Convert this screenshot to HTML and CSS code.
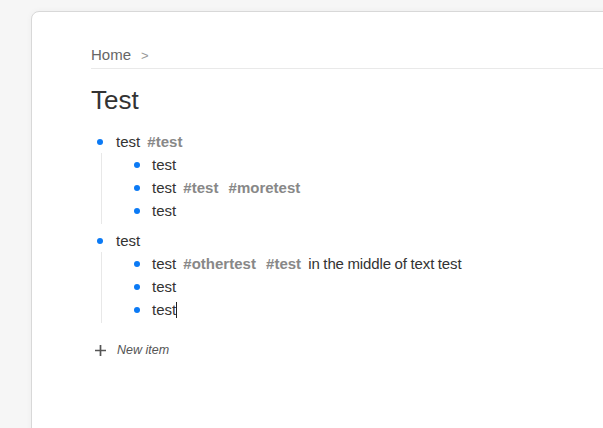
FILE: index.html
```html
<!DOCTYPE html>
<html>
<head>
<meta charset="utf-8">
<link rel="stylesheet" href="styles.css">
</head>
<body>
<div class="card">
  <div class="content">
    <div class="crumbs"><span class="crumb">Home</span><span class="sep">&gt;</span></div>
    <h1 class="title">Test</h1>
    <div class="outline">
      <div class="group">
        <div class="row"><span class="dot"></span><span class="txt">test <span class="tag">#test</span></span></div>
        <div class="children">
          <div class="row"><span class="dot"></span><span class="txt">test</span></div>
          <div class="row"><span class="dot"></span><span class="txt">test <span class="tag">#test</span> <span class="tag">#moretest</span></span></div>
          <div class="row"><span class="dot"></span><span class="txt">test</span></div>
        </div>
      </div>
      <div class="group">
        <div class="row"><span class="dot"></span><span class="txt">test</span></div>
        <div class="children">
          <div class="row"><span class="dot"></span><span class="txt">test <span class="tag">#othertest</span> <span class="tag">#test</span> <span class="plain">in the middle of text test</span></span></div>
          <div class="row"><span class="dot"></span><span class="txt">test</span></div>
          <div class="row"><span class="dot"></span><span class="txt">test<span class="caret"></span></span></div>
        </div>
      </div>
    </div>
    <div class="new-item">
      <svg class="plus" width="11" height="11" viewBox="0 0 11 11"><path d="M5.5 0v11M0 5.5h11" stroke="#555" stroke-width="1.7" fill="none"/></svg>
      <span class="new-label">New item</span>
    </div>
  </div>
</div>
</body>
</html>
```

FILE: styles.css
```css
html, body {
  margin: 0;
  padding: 0;
}
body {
  background: #f6f6f6;
  overflow: hidden;
  font-family: "Liberation Sans", Arial, sans-serif;
  color: #333;
}
.card {
  margin: 11px 0 0 31px;
  width: 700px;
  height: 500px;
  background: #fff;
  border: 1px solid #d8d8d8;
  border-radius: 8px 0 0 0;
  box-shadow: 0 0 6px rgba(0, 0, 0, 0.04);
}
.content {
  padding: 33px 0 0 59px;
}
.crumbs {
  font-size: 15px;
  line-height: 20px;
  padding-bottom: 2px;
  border-bottom: 1px solid #e9e9e9;
  color: #666;
}
.sep {
  color: #999;
  margin-left: 10px;
  font-size: 13px;
}
.title {
  margin: 16px 0 0 0;
  font-size: 26px;
  line-height: 30px;
  font-weight: normal;
  color: #333;
}
.outline {
  margin-top: 15px;
}
.group {
  margin-bottom: 5px;
}
.row {
  display: flex;
  align-items: center;
  height: 23px;
  font-size: 15px;
  line-height: 23px;
  padding-left: 6px;
}
.dot {
  width: 6px;
  height: 6px;
  border-radius: 50%;
  background: #0b7af5;
  flex: none;
  margin-right: 13px;
}
.txt {
  white-space: pre;
}
.plain {
  word-spacing: -0.5px;
  letter-spacing: -0.1px;
}
.children {
  margin-left: 10px;
  border-left: 1px solid #e8e8e8;
  padding: 0 0 2px 26px;
}
.children .dot {
  margin-right: 12px;
}
.tag {
  font-weight: bold;
  color: #888;
  padding: 0 3px;
}
.caret {
  display: inline-block;
  width: 1px;
  height: 16px;
  background: #222;
  vertical-align: -3px;
}
.new-item {
  display: flex;
  align-items: center;
  height: 20px;
  margin-top: 17px;
  padding-left: 4px;
}
.plus {
  flex: none;
}
.new-label {
  margin-left: 11px;
  font-size: 12.5px;
  font-style: italic;
  color: #555;
}
```
